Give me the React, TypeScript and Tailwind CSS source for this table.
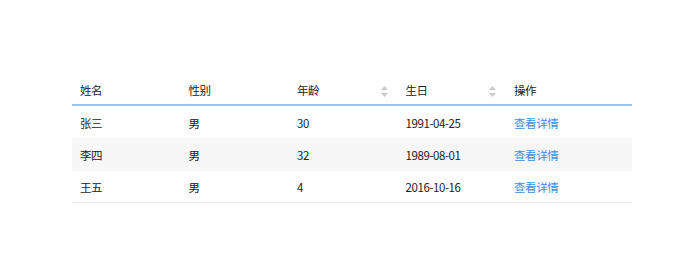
const rows = [
  { name: "张三", sex: "男", age: "30", birth: "1991-04-25", h: "h-[32px]" },
  { name: "李四", sex: "男", age: "32", birth: "1989-08-01", h: "h-[33px] bg-[#f7f7f7]" },
  { name: "王五", sex: "男", age: "4", birth: "2016-10-16", h: "h-[32px] border-b border-[#ececec]" },
];

function SortIcon() {
  return (
    <svg className="w-[7px] h-[11px] mr-[10px]" viewBox="0 0 7 11" aria-hidden="true">
      <path d="M3.5 0L7 4H0z" fill="#c8ccd2" />
      <path d="M3.5 11L7 7H0z" fill="#c8ccd2" />
    </svg>
  );
}

export default function App() {
  const cols = "grid grid-cols-[108.5px_108.5px_108.5px_108.5px_126px]";
  return (
    <div
      className="w-[700px] h-[263px] bg-white pt-[74px] pl-[72px] text-[11.5px] tracking-[-0.4px] text-[#222]"
      style={{ fontFamily: '"Noto Sans CJK SC", sans-serif' }}
    >
      <div className="w-[560px]">
        {/* header */}
        <div className={`${cols} h-[32px] items-center pt-[4px] border-b-2 border-[#9cc2ec]`}>
          <div className="pl-2">姓名</div>
          <div className="pl-2">性别</div>
          <div className="pl-2 flex items-center justify-between">
            <span>年龄</span>
            <SortIcon />
          </div>
          <div className="pl-2 flex items-center justify-between">
            <span>生日</span>
            <SortIcon />
          </div>
          <div className="pl-2">操作</div>
        </div>
        {rows.map((r) => (
          <div key={r.name} className={`${cols} ${r.h} items-center pt-[3px]`}>
            <div className="pl-2">{r.name}</div>
            <div className="pl-2">{r.sex}</div>
            <div className="pl-2">{r.age}</div>
            <div className="pl-2">{r.birth}</div>
            <div className="pl-2 text-[#3d8ee0]">查看详情</div>
          </div>
        ))}
      </div>
    </div>
  );
}
